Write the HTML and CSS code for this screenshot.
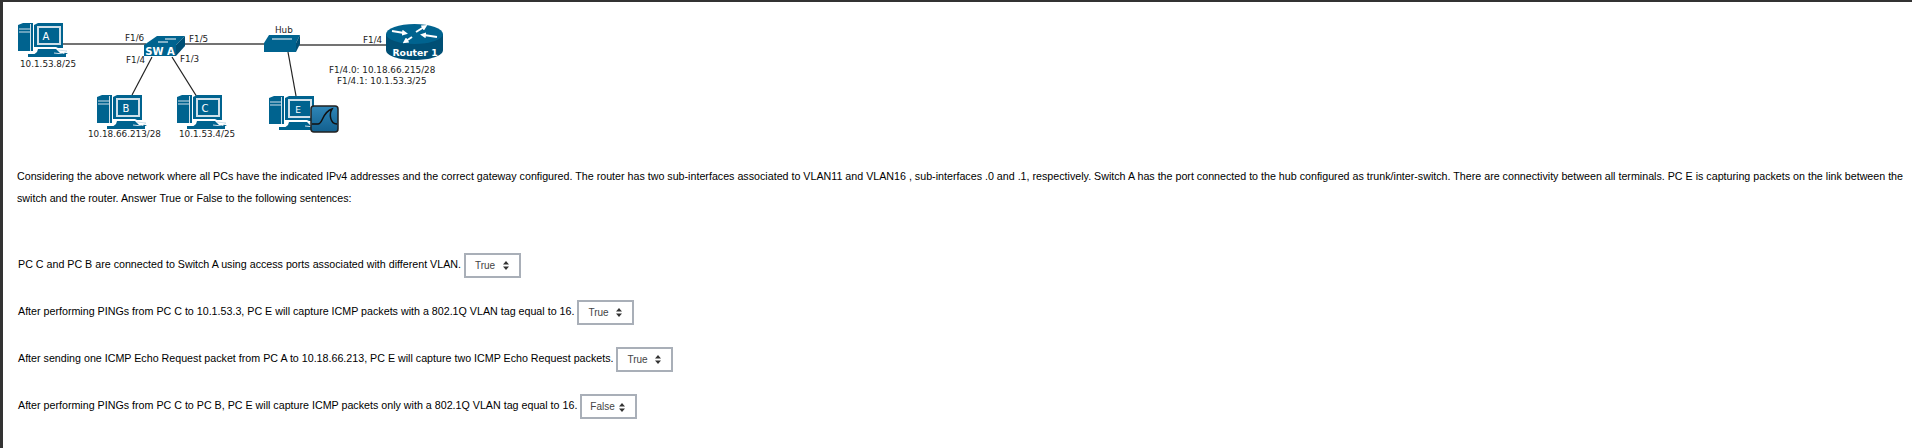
FILE: index.html
```html
<!DOCTYPE html>
<html lang="en">
<head>
  <meta charset="UTF-8" />
  <title>Network question</title>
  <link rel="stylesheet" href="styles.css">
</head>
<body>
<div class="question">

  <svg class="diagram" width="450" height="146" viewBox="0 0 450 146">
    <defs>
      <linearGradient id="badgeFill" x1="0" y1="0" x2="0" y2="1">
        <stop offset="0" stop-color="#2f86b8"/>
        <stop offset="1" stop-color="#125f8e"/>
      </linearGradient>
      <marker id="head" markerWidth="3" markerHeight="3" refX="1" refY="1.500" orient="auto">
        <path d="M0 0 L3 1.500 L0 3 Z" fill="#fff"/>
      </marker>
      <g id="pc">
        <path class="blue" d="M0 2 L5 0 H15 V28 H0 Z"/>
        <path class="pale" d="M1 6 H12 M1 9 H12 M12.500 1 V28" />
        <path class="blue" d="M16 2 L20 0 H45 V25 H40 L38 24 H16 Z"/>
        <rect class="pale-fill" x="19" y="3" width="24" height="19"/>
        <rect class="blue" x="21" y="5" width="20" height="15"/>
        <path class="blue" d="M20 26 H38 L42 30 H50 L45 33 H14 L19 29 Z"/>
        <path class="pale" d="M40 27 L49 28 L45 31 L36 30"/>
        <rect class="blue" x="10" y="31" width="38" height="3"/>
      </g>
    </defs>

    <path class="link" d="M60 44 H146"/>
    <path class="link" d="M182 44 H266"/>
    <path class="link" d="M298 45 H388"/>
    <path class="thin" d="M152 57 L132 95"/>
    <path class="thin" d="M172 57 L197 97"/>
    <path class="thin" d="M288 52 L296 96"/>

    <use href="#pc" x="18" y="23"/>
    <use href="#pc" x="97" y="95"/>
    <use href="#pc" x="177" y="95"/>
    <use href="#pc" x="269" y="96"/>

    <text class="pc-name" x="46" y="40">A</text>
    <text class="pc-name" x="126" y="112">B</text>
    <text class="pc-name" x="205" y="112">C</text>
    <text class="pc-name small" x="298" y="113">E</text>

    <!-- switch -->
    <path class="blue" d="M144 45 L157 36 H185 L176 45 Z"/>
    <path class="dark" d="M176 45 L185 36 V46 L176 56 Z"/>
    <rect class="blue" x="144" y="45" width="32" height="11"/>
    <path class="arrow" d="M158 42 H168 M165 39 H176"/>
    <text class="dev-name" x="160" y="55">SW A</text>

    <!-- hub -->
    <path class="blue" d="M264 43 L269 35 H300 L296 43 Z"/>
    <path class="dark" d="M296 43 L300 35 V44 L296 52 Z"/>
    <rect class="blue" x="264" y="43" width="32" height="9"/>
    <path class="arrow" d="M272 39 H292"/>

    <!-- router -->
    <path class="dark" d="M386 34 V50 C386 56 399 60 414.500 60 S443 56 443 50 V34 Z"/>
    <ellipse class="blue" cx="414.500" cy="34" rx="28.500" ry="10"/>
    <path class="arrow wide" marker-end="url(#head)" d="M392 31 L404 33"/>
    <path class="arrow wide" marker-end="url(#head)" d="M416 32 L424 27"/>
    <path class="arrow wide" marker-end="url(#head)" d="M437 37 L424 35"/>
    <path class="arrow wide" marker-end="url(#head)" d="M412 37 L406 41"/>
    <text class="dev-name router" x="415" y="56">Router 1</text>

    <!-- capture badge on PC E -->
    <rect class="badge" x="311" y="106" width="27" height="26" rx="3"/>
    <path class="wave" d="M312 124 H318 C323 124 322 112 332 109 C329 114 330 124 337 124"/>

    <text class="lbl" x="125" y="41">F1/6</text>
    <text class="lbl" x="189" y="42">F1/5</text>
    <text class="lbl" x="126" y="63">F1/4</text>
    <text class="lbl" x="180" y="62">F1/3</text>
    <text class="lbl" x="20" y="67">10.1.53.8/25</text>
    <text class="lbl" x="88" y="137">10.18.66.213/28</text>
    <text class="lbl" x="179" y="137">10.1.53.4/25</text>
    <text class="lbl" x="275" y="33">Hub</text>
    <text class="lbl" x="363" y="43">F1/4</text>
    <text class="lbl" x="329" y="73">F1/4.0: 10.18.66.215/28</text>
    <text class="lbl" x="337" y="84">F1/4.1: 10.1.53.3/25</text>
  </svg>

  <p class="intro">Considering the above network where all PCs have the indicated IPv4 addresses and the correct gateway configured. The router has two sub-interfaces associated to VLAN11 and VLAN16 , sub-interfaces .0 and .1, respectively. Switch A has the port connected to the hub configured as trunk/inter-switch. There are connectivity between all terminals. PC E is capturing packets on the link between the switch and the router. Answer True or False to the following sentences:</p>

  <div class="items">
    <div class="item">PC C and PC B are connected to Switch A using access ports associated with different VLAN.
      <span class="pick">True <svg class="updown" width="6" height="9" viewBox="0 0 6 9"><path d="M3 0 L6 3.500 H0 Z M3 9 L0 5.500 H6 Z"/></svg></span>
    </div>
    <div class="item">After performing PINGs from PC C to 10.1.53.3, PC E will capture ICMP packets with a 802.1Q VLAN tag equal to 16.
      <span class="pick">True <svg class="updown" width="6" height="9" viewBox="0 0 6 9"><path d="M3 0 L6 3.500 H0 Z M3 9 L0 5.500 H6 Z"/></svg></span>
    </div>
    <div class="item">After sending one ICMP Echo Request packet from PC A to 10.18.66.213, PC E will capture two ICMP Echo Request packets.
      <span class="pick">True <svg class="updown" width="6" height="9" viewBox="0 0 6 9"><path d="M3 0 L6 3.500 H0 Z M3 9 L0 5.500 H6 Z"/></svg></span>
    </div>
    <div class="item">After performing PINGs from PC C to PC B, PC E will capture ICMP packets only with a 802.1Q VLAN tag equal to 16.
      <span class="pick false">False <svg class="updown" width="6" height="9" viewBox="0 0 6 9"><path d="M3 0 L6 3.500 H0 Z M3 9 L0 5.500 H6 Z"/></svg></span>
    </div>
  </div>

</div>
</body>
</html>
```

FILE: styles.css
```css
* { box-sizing: border-box; }
html, body {
  margin: 0;
  height: 100%;
  overflow: hidden;
  background: #fff;
}
.question {
  height: 448px;
  border-top: 2px solid #333;
  border-left: 3px solid #333;
  font-family: "Liberation Sans", Arial, sans-serif;
  font-size: 10.700px;
  color: #000;
}
.diagram {
  display: block;
  margin-left: -3px;
  margin-top: -2px;
}
.blue { fill: #00638f; }
.dark { fill: #004f75; }
.pale { fill: none; stroke: #cfe0ea; stroke-width: 1; }
.pale-fill { fill: #cfe0ea; }
.link { stroke: #444; stroke-width: 1.500; fill: none; }
.thin { stroke: #222; stroke-width: 1.200; fill: none; }
.arrow { stroke: #fff; stroke-width: 1; fill: none; }
.arrow.wide { stroke-width: 2; }
.badge { fill: url(#badgeFill); stroke: #222; stroke-width: 1.500; }
.wave { fill: none; stroke: #111; stroke-width: 1.500; }
.lbl {
  font-family: "DejaVu Sans", sans-serif;
  font-size: 8.800px;
  fill: #222;
}
.pc-name {
  font-family: "DejaVu Sans", sans-serif;
  font-size: 10px;
  fill: #fff;
  text-anchor: middle;
}
.pc-name.small { font-size: 9px; }
.dev-name {
  font-family: "DejaVu Sans", sans-serif;
  font-size: 10px;
  font-weight: bold;
  fill: #fff;
  text-anchor: middle;
}
.dev-name.router { font-size: 9.300px; }
.intro {
  margin: 19px 0 0 14px;
  line-height: 22px;
}
.items {
  display: flex;
  flex-direction: column;
  gap: 22px;
  margin: 44px 0 0 15px;
}
.item {
  display: flex;
  align-items: flex-start;
  gap: 3px;
  height: 25px;
  line-height: 22px;
}
.pick {
  display: inline-flex;
  align-items: center;
  justify-content: space-between;
  width: 57px;
  height: 25px;
  padding: 0 10px 0 9px;
  border: 2px solid #a9afb8;
  font-size: 10px;
  color: #444;
}
.pick.false { padding: 0 10px 0 8px; align-items: flex-start; }
.pick.false .updown { margin-top: 7px; }
.updown { fill: #333; }
```
